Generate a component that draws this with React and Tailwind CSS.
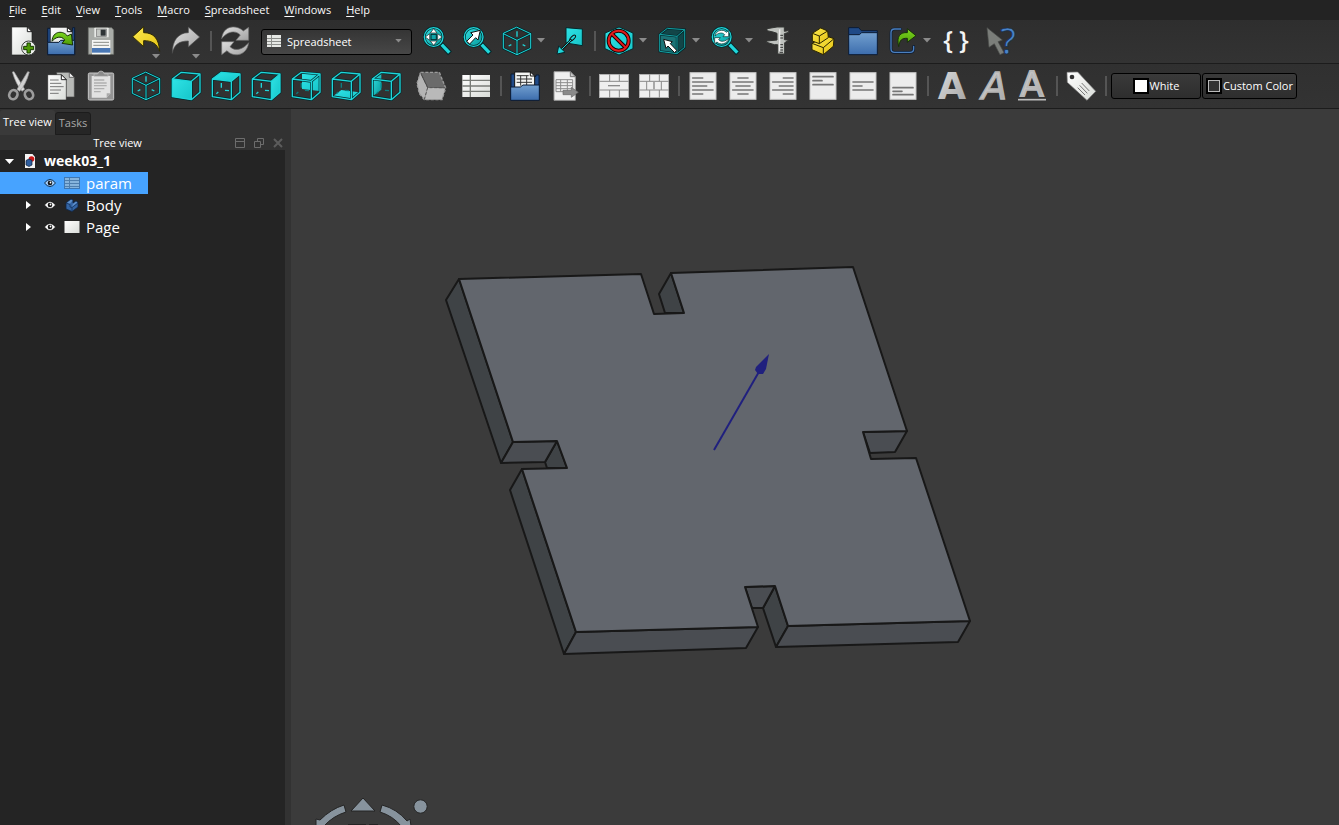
import React from 'react'
import { useState } from "react";

const TEAL = "#1fd6da";
const DARK = "#04282b";

function Icon({ children }) {
    return (
        <svg viewBox="0 0 90 90" className="h-[30px] w-[30px] shrink-0 overflow-visible" aria-hidden="true">
            {children}
        </svg>
    )
}

// a line with a dark casing under it
function Cased({ d, color = TEAL, casing = DARK, width = 4, fill = "none" }) {
    return (
        <g strokeLinejoin="round" strokeLinecap="round">
            <path d={d} fill={fill} stroke={casing} strokeWidth={width + 4} />
            <path d={d} fill={fill} stroke={color} strokeWidth={width} />
        </g>
    )
}

function Defs() {
    return (
        <svg width="0" height="0" className="absolute" aria-hidden="true">
            <defs>
                <linearGradient id="paper" x1="0" y1="0" x2="1" y2="1">
                    <stop offset="0" stopColor="#ffffff" />
                    <stop offset="1" stopColor="#d9dcd8" />
                </linearGradient>
                <linearGradient id="grey" x1="0" y1="0" x2="1" y2="1">
                    <stop offset="0" stopColor="#dedede" />
                    <stop offset="1" stopColor="#a2a2a2" />
                </linearGradient>
                <linearGradient id="blue" x1="0" y1="0" x2="0" y2="1">
                    <stop offset="0" stopColor="#729fcf" />
                    <stop offset="1" stopColor="#3c6dad" />
                </linearGradient>
                <linearGradient id="teal" x1="0" y1="0" x2="1" y2="1">
                    <stop offset="0" stopColor="#34e0e2" />
                    <stop offset="1" stopColor="#06989a" />
                </linearGradient>
                <linearGradient id="tealFace" x1="0" y1="0" x2="1" y2="1">
                    <stop offset="0" stopColor="#2fe3e6" />
                    <stop offset="1" stopColor="#16c6ca" />
                </linearGradient>
                <linearGradient id="green" x1="0" y1="0" x2="0" y2="1">
                    <stop offset="0" stopColor="#7ad61f" />
                    <stop offset="1" stopColor="#4e9a06" />
                </linearGradient>
                <linearGradient id="gold" x1="0" y1="0" x2="1" y2="1">
                    <stop offset="0" stopColor="#fce94f" />
                    <stop offset="1" stopColor="#e5c312" />
                </linearGradient>
            </defs>
        </svg>
    )
}

function NewIcon() {
    return (
        <Icon>
            <path d="M17 3H65L78 17V87H17Z" fill="url(#paper)" stroke="#1c1e1d" strokeWidth="2" />
            <path d="M64 3L78 17H64Z" fill="#fff" stroke="#222" strokeWidth="3" />
            <circle cx="68" cy="66" r="21" fill="#eef0ed" stroke="#3a3d3a" strokeWidth="3" />
            <path d="M63 51H73V61H83V71H73V81H63V71H53V61H63Z" fill="#4e9a06" stroke="#173a02" strokeWidth="3" />
        </Icon>
    )
}

function OpenIcon() {
    return (
        <Icon>
            <path d="M5 86V7H20V14H80V5H86V86Z" fill="#204a87" stroke="#0b1b33" strokeWidth="3" />
            <path d="M13 50V4H64L79 17V50Z" fill="url(#paper)" stroke="#111" strokeWidth="2" />
            <path d="M64 4V17H79Z" fill="#fff" stroke="#111" strokeWidth="3" />
            <path d="M5 49H38L44 43H86V86H5Z" fill="url(#blue)" stroke="#0b1b33" strokeWidth="3" />
            <path d="M18 46C20 12 54 14 64 30L76 24L80 57L48 52L56 42C46 27 27 34 18 46Z" fill="url(#green)" stroke="#17300a" strokeWidth="3" />
        </Icon>
    )
}

function SaveIcon() {
    return (
        <Icon>
            <path d="M7 5H77L83 12V85H7Z" fill="#a9aca8" stroke="#6f726e" strokeWidth="2" />
            <rect x="25" y="5" width="43" height="29" rx="2" fill="#e8eae7" />
            <rect x="31" y="9" width="30" height="22" fill="#c5c8c4" stroke="#777" strokeWidth="2" />
            <rect x="44" y="11" width="15" height="18" fill="#2e3436" />
            <rect x="18" y="42" width="55" height="43" fill="#f5f6f4" />
            <path d="M22 49H69M22 58H69" stroke="#8a8d89" strokeWidth="3" />
            <rect x="18" y="66" width="55" height="14" fill="#4a78b5" />
        </Icon>
    )
}

function UndoIcon() {
    return (
        <Icon>
            <path d="M5 32L38 2V20C68 20 84 38 86 76C78 54 64 44 38 44V62Z" fill="url(#gold)" stroke="#302b00" strokeWidth="3" strokeLinejoin="round" />
        </Icon>
    )
}

function RedoIcon() {
    return (
        <Icon>
            <path d="M86 33L52 3V20C22 20 3 44 4 82C9 56 24 45 52 45V63Z" fill="url(#grey)" stroke="#4c4c4c" strokeWidth="2" strokeLinejoin="round" />
        </Icon>
    )
}

function RefreshIcon() {
    return (
        <Icon>
            <path d="M5 38C10 -4 50 -4 70 15L86 4V43H48L61 27C45 10 20 18 5 38Z" fill="url(#grey)" stroke="#6d6d6d" strokeWidth="2" />
            <path d="M86 50C80 92 38 94 21 74L5 86V47H42L30 62C46 78 70 70 86 50Z" fill="url(#grey)" stroke="#6d6d6d" strokeWidth="2" />
        </Icon>
    )
}

function Magnifier({ children }) {
    return (
        <Icon>
            <path d="M57 54L84 82" stroke={DARK} strokeWidth="16" />
            <path d="M59 56L82 80" stroke={TEAL} strokeWidth="10" />
            <circle cx="35" cy="33" r="28" fill="url(#teal)" stroke={DARK} strokeWidth="8" />
            <circle cx="35" cy="33" r="28" fill="none" stroke={TEAL} strokeWidth="4" />
            {children}
        </Icon>
    )
}

function FitAllIcon() {
    return (
        <Magnifier>
            <path d="M35 8L45 21H25ZM35 58L45 45H25ZM10 33L23 23V43ZM60 33L47 23V43Z" fill="#fff" stroke="#222" strokeWidth="2" />
            <rect x="27" y="25" width="16" height="16" fill="#0fa5a8" stroke={DARK} strokeWidth="3" />
        </Magnifier>
    )
}

function FitSelectionIcon() {
    return (
        <Magnifier>
            <path d="M14 46L33 27L26 20L55 13L48 42L41 35L23 54Z" fill="#fff" stroke="#111" strokeWidth="3" />
        </Magnifier>
    )
}

function SyncViewIcon() {
    return (
        <Magnifier>
            <path d="M15 30C17 12 41 8 49 19L56 14V32H39L44 26C37 18 25 20 15 30Z" fill="#fff" stroke={DARK} strokeWidth="2" />
            <path d="M56 37C53 55 29 58 21 48L14 53V35H31L26 41C33 49 46 47 56 37Z" fill="#fff" stroke={DARK} strokeWidth="2" />
        </Magnifier>
    )
}

function IsoIcon() {
    return (
        <Icon>
            <path d="M45 16V32M20 60L28 56M70 60L62 56" stroke={TEAL} strokeWidth="4" />
            <Cased d="M45 4L86 23V67L45 86L4 67V23ZM4 23L45 43L86 23M45 43V86" width={3} />
        </Icon>
    )
}

const faces = {
    front: "M4 24L61 31V86L4 77Z",
    top: "M4 24L31 4L87 9L61 31Z",
    right: "M61 31L87 9V64L61 86Z",
    rear: "M33 6L85 10V60L33 54Z",
    bottom: "M6 76L31 57L84 64L61 84Z",
    left: "M5 25L31 6V56L5 76Z",
};

const cubeEdges = "M4 24L31 4L87 9V64L61 86L4 77ZM4 24L61 31L87 9M61 31V86";

function CubeIcon({ face }) {
    const inner = face === "left" || face === "rear" || face === "bottom";
    return (
        <Icon>
            {inner && <path d={faces[face]} fill={face === "left" ? "url(#teal)" : "url(#tealFace)"} />}
            <path d="M31 36V50M16 68L22 63M42 58L54 59" stroke={inner ? "#0a7d80" : TEAL} strokeWidth="4" />
            <path d={cubeEdges} fill="none" stroke={DARK} strokeWidth="8" strokeLinejoin="round" />
            {!inner && <path d={faces[face]} fill="url(#tealFace)" />}
            <path d={cubeEdges} fill="none" stroke={TEAL} strokeWidth="4" strokeLinejoin="round" />
        </Icon>
    )
}

function AlignToViewIcon() {
    return (
        <Icon>
            <path d="M33 5L82 9V59L33 51Z" fill="url(#tealFace)" stroke={DARK} strokeWidth="3" />
            <ellipse cx="53" cy="36" rx="11" ry="5" transform="rotate(-45 53 36)" fill="none" stroke="#111" strokeWidth="3" />
            <Cased d="M48 42L20 70" width={3} casing="#111" />
            <path d="M6 84L11 60L30 79Z" fill={TEAL} stroke={DARK} strokeWidth="3" />
        </Icon>
    )
}

function DrawStyleIcon() {
    return (
        <Icon>
            <path d="M45 3L87 21V68L45 87L3 68V21Z" fill="url(#tealFace)" stroke={DARK} strokeWidth="3" />
            <g fill="none">
                <circle cx="44" cy="44" r="30" stroke="#180000" strokeWidth="12" />
                <path d="M23 23L65 65" stroke="#180000" strokeWidth="12" />
                <circle cx="44" cy="44" r="30" stroke="#e01b1b" strokeWidth="6" />
                <path d="M23 23L65 65" stroke="#e01b1b" strokeWidth="6" />
            </g>
        </Icon>
    )
}

function BoxSelectIcon() {
    return (
        <Icon>
            <path d="M8 25L31 7L83 11V64L60 83L8 76Z" fill="#124548" />
            <path d="M8 25L60 31V83L8 76Z" fill="#1b7376" />
            <path d="M8 25L31 7L83 11V64L60 83L8 76ZM8 25L60 31L83 11M60 31V83" fill="none" stroke={DARK} strokeWidth="7" />
            <path d="M8 25L31 7L83 11V64L60 83L8 76ZM8 25L60 31L83 11M60 31V83" fill="none" stroke="#14a0a4" strokeWidth="3" />
            <path d="M20 40L46 47L40 53L59 73L53 80L33 60L27 67Z" fill="#fff" stroke="#111" strokeWidth="3" />
        </Icon>
    )
}

function CaliperIcon() {
    return (
        <Icon>
            <path d="M12 8L42 3H64V16L77 14V19L64 23V41L77 43L65 50V84H44V56H34L11 49V45L42 42V22L30 18L12 14Z" fill="#bfc2be" stroke="#343634" strokeWidth="3" />
            <path d="M50 10V76" stroke="#eeeeee" strokeWidth="4" />
            <path d="M60 28H52M60 36H52M60 56H52M60 64H52M60 72H52M60 79H50" stroke="#333" strokeWidth="3" />
        </Icon>
    )
}

function PartIcon() {
    return (
        <Icon>
            <g fill="url(#gold)" stroke="#2b2500" strokeWidth="3" strokeLinejoin="round">
                <path d="M12 52L54 30L78 38L76 61L46 86L12 71Z" />
                <path d="M12 52L46 65L78 38M46 65V86" fill="none" />
                <path d="M13 22L38 6L59 15L61 35L34 53L13 45Z" />
                <path d="M13 22L34 30L59 15M34 30V53" fill="none" />
            </g>
        </Icon>
    )
}

function GroupIcon() {
    return (
        <Icon>
            <path d="M2 24V5H32L40 14H88V30H2Z" fill="#204a87" stroke="#0b1b33" strokeWidth="3" />
            <path d="M2 26H34L41 20H88V86H2Z" fill="url(#blue)" stroke="#0b1b33" strokeWidth="3" />
        </Icon>
    )
}

function LinkIcon() {
    return (
        <Icon>
            <Cased d="M38 9H20Q9 9 9 20V68Q9 79 20 79H66Q77 79 77 68V61" color="#4a7fbf" casing="#0b1b33" />
            <path d="M32 62C24 30 38 18 58 20V8L84 29L58 49V37C42 36 35 42 32 62Z" fill="url(#green)" stroke="#17300a" strokeWidth="3" />
        </Icon>
    )
}

function ExpressionIcon() {
    return (
        <Icon>
            <text x="7" y="68" fontSize="76" fontFamily="Open Sans, sans-serif" fontWeight="600" fill="#f4f4f4">{"{"}</text>
            <text x="54" y="68" fontSize="76" fontFamily="Open Sans, sans-serif" fontWeight="600" fill="#f4f4f4">{"}"}</text>
        </Icon>
    )
}

function WhatsThisIcon() {
    return (
        <Icon>
            <path d="M3 5L49 42L36 47L54 80L42 86L25 53L9 64Z" fill="#7b7e7a" stroke="#4c4e4b" strokeWidth="2" />
            <text x="43" y="84" fontSize="108" fontFamily="Open Sans, sans-serif" fill="#4a84c9" stroke="#122b4c" strokeWidth="2">?</text>
        </Icon>
    )
}

function CutIcon() {
    return (
        <Icon>
            <path d="M19 3L24 2L56 55L48 61Q30 40 19 3Z" fill="#e0e0e0" stroke="#999" strokeWidth="2" />
            <path d="M70 3L65 2L33 55L41 61Q60 40 70 3Z" fill="#d0d0d0" stroke="#999" strokeWidth="2" />
            <ellipse cx="22" cy="71" rx="12" ry="14" fill="none" stroke="#9c9c9c" strokeWidth="8" transform="rotate(25 22 71)" />
            <ellipse cx="69" cy="71" rx="12" ry="14" fill="none" stroke="#9c9c9c" strokeWidth="8" transform="rotate(-25 69 71)" />
        </Icon>
    )
}

function CopyIcon() {
    return (
        <Icon>
            <path d="M32 4H70L85 19V78H32Z" fill="#b8bab7" stroke="#444" strokeWidth="2" />
            <path d="M70 4V19H85Z" fill="#eee" stroke="#333" strokeWidth="2" />
            <path d="M5 11H46L61 26V87H5Z" fill="url(#paper)" stroke="#222" strokeWidth="2" />
            <path d="M46 11V26H61Z" fill="#fff" stroke="#222" strokeWidth="3" />
            <path d="M12 27H38M12 37H46M12 47H53M12 57H45M12 67H38" stroke="#777" strokeWidth="3" />
        </Icon>
    )
}

function PasteIcon() {
    return (
        <Icon>
            <rect x="7" y="6" width="76" height="81" rx="4" fill="#949494" stroke="#c9c9c9" strokeWidth="3" />
            <path d="M17 15H73V67L62 80H17Z" fill="#e2e2e2" />
            <path d="M62 80V67H73Z" fill="#aaa" />
            <path d="M24 16V9H35Q37 0 45 0Q53 0 55 9H66V16Z" fill="#8a8a8a" stroke="#c2c2c2" strokeWidth="2" />
            <path d="M24 27H55M24 36H62M24 44H62M24 53H55M24 62H44" stroke="#b0b0b0" strokeWidth="4" />
        </Icon>
    )
}

function SolidIcon() {
    return (
        <Icon>
            <path d="M12 5L34 50L25 85L10 68L3 37Z" fill="#b4b4b4" />
            <path d="M14 4H70L90 50L36 50Z" fill="#6b6b6b" />
            <path d="M34 50L88 52L78 86H25Z" fill="#b9b9b9" />
            <path d="M14 4H70L89 51L78 86H25L10 68L3 37L14 4" fill="none" stroke="#9b9b9b" strokeWidth="4" strokeDasharray="9 5" />
            <path d="M14 4L35 50H88M35 50L25 86" fill="none" stroke="#555" strokeWidth="3" strokeDasharray="9 5" />
        </Icon>
    )
}

function SheetIcon() {
    return (
        <Icon>
            <rect x="4" y="12" width="83" height="66" fill="url(#paper)" />
            <path d="M4 28H87M4 45H87M4 61H87M28 12V78" stroke="#787b77" strokeWidth="4" />
        </Icon>
    )
}

function ImportIcon() {
    return (
        <Icon>
            <path d="M3 86V9H14V16H78V12H87V86Z" fill="#204a87" stroke="#0b1b33" strokeWidth="3" />
            <path d="M14 50V3H62L74 15V50Z" fill="#f4f5f3" stroke="#111" strokeWidth="3" />
            <path d="M61 3V15H74Z" fill="#fff" stroke="#111" strokeWidth="3" />
            <path d="M20 14H56M20 24H66M20 34H66M32 14V44M50 14V44" stroke="#333" strokeWidth="3" />
            <path d="M2 48H31L39 42H88V88H2Z" fill="url(#blue)" stroke="#0b1b33" strokeWidth="3" />
        </Icon>
    )
}

function ExportIcon() {
    return (
        <Icon>
            <path d="M12 2H61L76 17V88H12Z" fill="#f0f0f0" stroke="#999" strokeWidth="3" />
            <path d="M61 2V17H76Z" fill="#c8c8c8" stroke="#777" strokeWidth="3" />
            <path d="M18 26H68V62H18ZM18 35H68M18 44H68M18 53H68M32 26V62M52 26V62" fill="none" stroke="#8d8d8d" strokeWidth="3" />
            <path d="M39 58H64V49L85 64L64 79V71H39Z" fill="#8a8a8a" stroke="#666" strokeWidth="2" />
        </Icon>
    )
}

function MergeIcon() {
    return (
        <Icon>
            <rect x="1" y="10" width="88" height="70" fill="#efefef" stroke="#b3b3b3" strokeWidth="2" />
            <path d="M1 31H89M1 57H89M32 10V31M61 10V31M32 57V80M61 57V80" stroke="#8a8a8a" strokeWidth="3" />
            <path d="M27 44H63" stroke="#8a8a8a" strokeWidth="4" />
        </Icon>
    )
}

function SplitIcon() {
    return (
        <Icon>
            <rect x="1" y="10" width="88" height="70" fill="#efefef" stroke="#b3b3b3" strokeWidth="2" />
            <path d="M1 31H89M1 57H89M32 10V31M61 10V31M32 57V80M61 57V80M23 31V57M67 31V57" stroke="#8a8a8a" strokeWidth="3" />
            <path d="M45 33V55" stroke="#9a9a9a" strokeWidth="5" />
        </Icon>
    )
}

function TextLines({ d }) {
    return (
        <Icon>
            <rect x="6" y="5" width="78" height="80" fill="#ececec" stroke="#c4c4c4" strokeWidth="3" />
            <path d={d} stroke="#757575" strokeWidth="5" strokeLinecap="round" />
        </Icon>
    )
}

function BoldIcon() {
    return (
        <Icon>
            <text x="45" y="84" textAnchor="middle" fontSize="110" fontFamily="DejaVu Sans, sans-serif" fontWeight="bold" fill="url(#grey)">A</text>
        </Icon>
    )
}

function ItalicIcon() {
    return (
        <Icon>
            <text x="52" y="84" textAnchor="middle" fontSize="112" fontFamily="DejaVu Sans, sans-serif" fontStyle="italic" fill="url(#grey)" stroke="#b5b5b5" strokeWidth="4">A</text>
        </Icon>
    )
}

function UnderlineIcon() {
    return (
        <Icon>
            <text x="45" y="75" textAnchor="middle" fontSize="102" fontFamily="DejaVu Sans, sans-serif" fill="url(#grey)" stroke="#b8b8b8" strokeWidth="6">A</text>
            <path d="M3 86H87" stroke="#bdbdbd" strokeWidth="5" />
        </Icon>
    )
}

function AliasIcon() {
    return (
        <Icon>
            <path d="M3 4L35 3L89 61L63 88L4 34Z" fill="url(#paper)" stroke="#888" strokeWidth="2" />
            <circle cx="18" cy="18" r="7" fill="#333" />
            <path d="M47 36L70 60M41 43L64 67M35 50L57 72" stroke="#777" strokeWidth="3" />
        </Icon>
    )
}

function DownTriangle({ className }) {
    return (
        <svg viewBox="0 0 8 5" className={className} aria-hidden="true">
            <path d="M0 0H8L4 4.5Z" fill="#8b8b8b" />
        </svg>
    )
}

function ToolButton({ label, icon, history }) {
    return (
        <button type="button" aria-label={label} className="relative flex h-10 w-10 items-center justify-center">
            {icon}
            {history && <DownTriangle className="absolute right-[6px] bottom-[2px] h-[5px] w-[8px]" />}
        </button>
    )
}

function MenuToolButton({ label, icon }) {
    return (
        <button type="button" aria-label={label} className="flex h-10 w-[53px] items-center pl-[5px]">
            {icon}
            <DownTriangle className="ml-[5px] h-[5px] w-[8px]" />
        </button>
    )
}

function Separator() {
    return (
        <div className="flex w-[9px] justify-center">
            <div className="h-5 w-[2px] bg-[#555555]"></div>
        </div>
    )
}

function Group({ children }) {
    return <div className="flex items-center">{children}</div>
}

const menus = ["File", "Edit", "View", "Tools", "Macro", "Spreadsheet", "Windows", "Help"];

function MenuBar() {
    return (
        <nav className="flex h-5 shrink-0 items-center gap-[15px] bg-[#232323] pl-[9px]">
            {menus.map(menu => (
                <button key={menu} type="button" className="text-[11px] leading-5 text-[#fafafa]">
                    <span className="underline underline-offset-2">{menu[0]}</span>{menu.slice(1)}
                </button>
            ))}
        </nav>
    )
}

function MainToolbar() {
    const [workbench, setWorkbench] = useState("Spreadsheet");

    return (
        <div className="flex h-11 shrink-0 items-center border-b border-[#1c1c1c] bg-linear-to-b from-[#2e2e2e] to-[#333333] pb-[2px] pl-px">
            <Group>
                <ToolButton label="New" icon={<NewIcon />} />
                <ToolButton label="Open" icon={<OpenIcon />} />
                <ToolButton label="Save" icon={<SaveIcon />} />
            </Group>
            <div className="w-[5px]"></div>
            <Group>
                <ToolButton label="Undo" icon={<UndoIcon />} history />
                <ToolButton label="Redo" icon={<RedoIcon />} history />
                <Separator />
                <ToolButton label="Refresh" icon={<RefreshIcon />} />
            </Group>
            <div className="relative mr-[5px] ml-[6px] h-[26px] w-[151px]">
                <select
                    aria-label="Workbench"
                    value={workbench}
                    onChange={e => setWorkbench(e.target.value)}
                    className="h-full w-full appearance-none rounded-[3px] border border-black bg-linear-to-b from-[#353535] to-[#474747] pl-[25px] text-[11px] text-white">
                    <option>Spreadsheet</option>
                    <option>Part Design</option>
                    <option>TechDraw</option>
                </select>
                <svg viewBox="0 0 14 12" className="pointer-events-none absolute top-[7px] left-[6px] h-[12px] w-[14px]" aria-hidden="true">
                    <rect width="14" height="12" fill="#e6e8e5" />
                    <path d="M0 3.5H14M0 6.5H14M0 9.5H14M4.5 0V12" stroke="#8c8e8b" />
                </svg>
                <DownTriangle className="pointer-events-none absolute top-[11px] right-[10px] h-[4px] w-[7px]" />
            </div>
            <Group>
                <ToolButton label="Fit all" icon={<FitAllIcon />} />
                <ToolButton label="Fit selection" icon={<FitSelectionIcon />} />
                <MenuToolButton label="Isometric" icon={<IsoIcon />} />
                <ToolButton label="Align to selection" icon={<AlignToViewIcon />} />
                <Separator />
                <MenuToolButton label="Draw style" icon={<DrawStyleIcon />} />
                <MenuToolButton label="Bounding box" icon={<BoxSelectIcon />} />
                <MenuToolButton label="Sync view" icon={<SyncViewIcon />} />
                <ToolButton label="Measure" icon={<CaliperIcon />} />
            </Group>
            <div className="w-[5px]"></div>
            <Group>
                <ToolButton label="Create part" icon={<PartIcon />} />
                <ToolButton label="Create group" icon={<GroupIcon />} />
                <MenuToolButton label="Make link" icon={<LinkIcon />} />
                <ToolButton label="Expressions" icon={<ExpressionIcon />} />
            </Group>
            <div className="w-[5px]"></div>
            <ToolButton label="What's this?" icon={<WhatsThisIcon />} />
        </div>
    )
}

function ColorButton({ label, swatch }) {
    return (
        <button type="button" className="flex h-[26px] min-w-[90px] items-center justify-center rounded-[3px] border border-black bg-linear-to-b from-[#3a3a3a] to-[#2e2e2e] px-[3px] text-[11px] text-white">
            <span className={`mr-px h-4 w-4 border-2 border-black p-px ${swatch}`}></span>
            {label}
        </button>
    )
}

function SheetToolbar() {
    return (
        <div className="flex h-[45px] shrink-0 items-center border-b border-[#1c1c1c] bg-linear-to-b from-[#303030] to-[#333333] pl-px">
            <Group>
                <ToolButton label="Cut" icon={<CutIcon />} />
                <ToolButton label="Copy" icon={<CopyIcon />} />
                <ToolButton label="Paste" icon={<PasteIcon />} />
            </Group>
            <div className="w-[5px]"></div>
            <Group>
                <ToolButton label="Isometric view" icon={<IsoIcon />} />
                {Object.keys(faces).map(face => (
                    <ToolButton key={face} label={`${face} view`} icon={<CubeIcon face={face} />} />
                ))}
            </Group>
            <div className="w-[5px]"></div>
            <ToolButton label="Solid" icon={<SolidIcon />} />
            <div className="w-[5px]"></div>
            <Group>
                <ToolButton label="Create spreadsheet" icon={<SheetIcon />} />
                <Separator />
                <ToolButton label="Import" icon={<ImportIcon />} />
                <ToolButton label="Export" icon={<ExportIcon />} />
                <Separator />
                <ToolButton label="Merge cells" icon={<MergeIcon />} />
                <ToolButton label="Split cell" icon={<SplitIcon />} />
                <Separator />
                <ToolButton label="Align left" icon={<TextLines d="M14 21H44M14 33H75M14 45H56M14 57H75M14 69H44" />} />
                <ToolButton label="Align center" icon={<TextLines d="M30 21H60M14 33H75M24 45H66M14 57H75M30 69H60" />} />
                <ToolButton label="Align right" icon={<TextLines d="M46 21H75M14 33H75M34 45H75M14 57H75M46 69H75" />} />
                <ToolButton label="Align top" icon={<TextLines d="M15 17H75M15 29H42M15 41H75" />} />
                <ToolButton label="Align middle" icon={<TextLines d="M15 33H75M15 45H42M15 57H75" />} />
                <ToolButton label="Align bottom" icon={<TextLines d="M15 50H75M15 61H42M15 71H75" />} />
                <Separator />
                <ToolButton label="Bold" icon={<BoldIcon />} />
                <ToolButton label="Italic" icon={<ItalicIcon />} />
                <ToolButton label="Underline" icon={<UnderlineIcon />} />
                <Separator />
                <ToolButton label="Set alias" icon={<AliasIcon />} />
                <Separator />
            </Group>
            <div className="ml-px flex gap-px">
                <ColorButton label="White" swatch="bg-white" />
                <ColorButton label="Custom Color" swatch="bg-[#333333] outline outline-[#bbbbbb] -outline-offset-3" />
            </div>
        </div>
    )
}

function Eye({ light }) {
    return (
        <svg viewBox="0 0 12 10" className="h-[10px] w-[12px]" aria-hidden="true">
            {light
                ? <path d="M0.500 5Q6 -2 11.500 5Q6 12 0.500 5Z" fill="#a9d4ff" stroke="#0e2a47" />
                : <path d="M0.500 5Q6 -2 11.500 5Q6 12 0.500 5Z" fill="#ffffff" stroke="#000000" strokeWidth="0.5" />}
            <circle cx="6" cy="5" r="2.3" fill="#111" />
            <circle cx="6.500" cy="4.500" r="0.9" fill="#fff" />
        </svg>
    )
}

function DocumentIcon() {
    return (
        <svg viewBox="0 0 12 14" className="h-[14px] w-[12px]" aria-hidden="true">
            <path d="M1 0H8.500L11 3V14H1Z" fill="#f4f4f4" />
            <circle cx="7.500" cy="5" r="2.8" fill="#cc1818" />
            <path d="M2 6.500L5 5L8 6.500V11L5 12.500L2 11Z" fill="#2f5f9f" stroke="#0b1b33" strokeWidth="0.7" />
        </svg>
    )
}

function ParamIcon() {
    return (
        <svg viewBox="0 0 16 12" className="h-[12px] w-[16px]" aria-hidden="true">
            <rect x="0.500" y="0.500" width="15" height="11" fill="#86b4dc" stroke="#3f78b3" />
            <path d="M1 3.500H15M1 6.500H15M1 9.500H15M5.500 1V11" stroke="#4f7fae" />
        </svg>
    )
}

function BodyIcon() {
    return (
        <svg viewBox="0 0 14 14" className="mx-px h-[14px] w-[14px]" aria-hidden="true">
            <path d="M1 5L6 1L8 2V5L11 3L13 4.500V9L7 13.500L1 11Z" fill="#3465a4" stroke="#0f2748" strokeWidth="0.8" />
            <path d="M1 5L5 6.500V9L7 9.500L13 5M7 9.500V13" fill="none" stroke="#15325c" strokeWidth="0.8" />
            <path d="M2 4.700L6 1.700L7.500 2.400L5 5.600ZM8 6L11 3.600L12.300 4.600L7 8.700Z" fill="#5e8fca" />
        </svg>
    )
}

function PageIcon() {
    return (
        <svg viewBox="0 0 16 12" className="h-[12px] w-[16px]" aria-hidden="true">
            <rect x="0.500" y="0" width="15" height="12" fill="url(#paper)" />
        </svg>
    )
}

function Tree() {
    const [selected, setSelected] = useState("param");
    const items = [
        { name: "param", icon: <ParamIcon />, children: false },
        { name: "Body", icon: <BodyIcon />, children: true },
        { name: "Page", icon: <PageIcon />, children: true },
    ];

    return (
        <div className="mr-[6px] flex-1 bg-[#242424] text-[15px] leading-[22px] text-white">
            <button type="button" className="flex h-[22px] items-center pl-[5px] text-sm leading-[22px] font-bold">
                <svg viewBox="0 0 9 5" className="h-[5px] w-[9px]" aria-hidden="true">
                    <path d="M0 0H9L4.500 5Z" fill="#fff" />
                </svg>
                <span className="mr-2 ml-[10px]"><DocumentIcon /></span>
                week03_1
            </button>
            <ul>
                {items.map(item => (
                    <li key={item.name} className="flex">
                        <button
                            type="button"
                            onClick={() => setSelected(item.name)}
                            className={`flex h-[22px] w-[148px] items-center pl-[26px] ${selected === item.name ? "bg-[#47a3ff]" : ""}`}>
                            <svg viewBox="0 0 5 8" className="mr-[13px] h-[8px] w-[5px]" aria-hidden="true">
                                {item.children && <path d="M0 0V8L5 4Z" fill="#fff" />}
                            </svg>
                            <Eye light={selected === item.name} />
                            <span className="mr-[6px] ml-2">{item.icon}</span>
                            {item.name}
                        </button>
                    </li>
                ))}
            </ul>
        </div>
    )
}

function SidePanel() {
    return (
        <aside className="flex w-[291px] shrink-0 flex-col bg-[#323232] text-[11px]">
            <div className="flex h-[26px] items-end">
                <button type="button" className="h-[25px] rounded-t-[3px] bg-[#3a3a3a] px-[3px] text-white">Tree view</button>
                <button type="button" className="h-[23px] rounded-t-[3px] border border-[#1c1c1c] bg-[#262626] px-[3px] text-[#a8a8a8]">Tasks</button>
            </div>
            <div className="flex h-[15px] items-center pr-2 text-white">
                <h2 className="flex-1 text-center leading-[15px]">Tree view</h2>
                <div className="flex gap-[9px]">
                    <button type="button" aria-label="Dock">
                        <svg viewBox="0 0 10 10" className="h-[10px] w-[10px]" fill="none" stroke="#6d6d6d">
                            <path d="M0.500 0.500H9.500V9.500H0.500ZM0.500 3.500H9.500" />
                        </svg>
                    </button>
                    <button type="button" aria-label="Float">
                        <svg viewBox="0 0 10 10" className="h-[10px] w-[10px]" fill="none" stroke="#6d6d6d">
                            <path d="M0.500 3.500H6.500V9.500H0.500ZM3.500 3V0.500H9.500V6.500H7" />
                        </svg>
                    </button>
                    <button type="button" aria-label="Close">
                        <svg viewBox="0 0 10 10" className="h-[10px] w-[10px]" stroke="#5c5c5c" strokeWidth="2">
                            <path d="M1 1L9 9M9 1L1 9" />
                        </svg>
                    </button>
                </div>
            </div>
            <Tree />
        </aside>
    )
}

function Viewport() {
    return (
        <main className="min-w-0 flex-1 bg-[#3b3b3b]">
            <svg viewBox="291 109 1048 716" preserveAspectRatio="xMidYMid slice" className="h-full w-full" role="img" aria-label="Model">
                <g stroke="#181818" strokeWidth="2" strokeLinejoin="round">
                    <g fill="#3f4346">
                        <path d="M459 279L513 442L501 463L446 300Z" />
                        <path d="M522 469L576 632L564 654L510 490Z" />
                        <path d="M557 441L567 468H547L545 462Z" />
                        <path d="M671 273L684 313H665L659 294Z" />
                        <path d="M775 586L788 626L776 647L763 608Z" />
                    </g>
                    <g fill="#4a4d52">
                        <path d="M513 442L557 441L545 462L501 463Z" />
                        <path d="M576 632L758 627L746 648L564 654Z" />
                        <path d="M788 626L970 621L958 642L776 647Z" />
                        <path d="M745 587L775 586L763 608H752Z" />
                        <path d="M863 432L907 431L895 452L870 453Z" />
                    </g>
                    <path d="M459 279L641 274L654 314L684 313L671 273L853 267L907 431L863 432L871 459L916 458L970 621L788 626L775 586L745 587L758 627L576 632L522 469L567 468L557 441L513 442Z" fill="#62666d" />
                </g>
                <path d="M714 450L760 370" stroke="#20207e" strokeWidth="2" />
                <path d="M769 354L766 369L763 374L758 374L755 370L756 367Z" fill="#20207e" />
                <g fill="#87939d" stroke="#242424" strokeWidth="1">
                    <path d="M363 798L375 811H351Z" />
                    <circle cx="420.500" cy="806.500" r="6.700" />
                    <path d="M344 805L346 812Q333 816 324 826H316V819L320 820Q331 809 344 805Z" />
                    <path d="M382 805Q397 809 407 821L410 819L411 826H401Q393 816 380 812Z" />
                </g>
                <path d="M348 824.500H366M369 824.500H378" stroke="#242424" />
            </svg>
        </main>
    )
}

function App() {
    return (
        <div className="flex h-screen flex-col overflow-hidden bg-[#323232] font-['Open_Sans',sans-serif]">
            <Defs />
            <MenuBar />
            <MainToolbar />
            <SheetToolbar />
            <div className="flex min-h-0 flex-1">
                <SidePanel />
                <Viewport />
            </div>
        </div>
    )
}

export default App;
